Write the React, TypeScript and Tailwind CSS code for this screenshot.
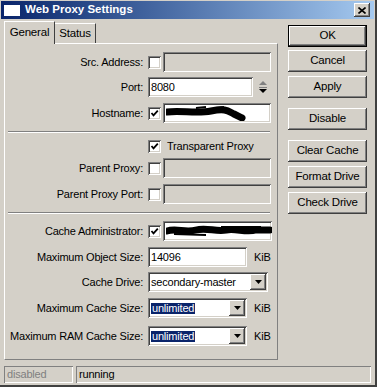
import React from 'react';

const raised =
  'shadow-[inset_-1px_-1px_0_#404040,inset_1px_1px_0_#ffffff,inset_-2px_-2px_0_#808080]';
const sunken =
  'shadow-[inset_1px_1px_0_#808080,inset_-1px_-1px_0_#ffffff,inset_2px_2px_0_#404040,inset_-2px_-2px_0_#d4d0c8]';
const thin = 'shadow-[inset_1px_1px_0_#808080,inset_-1px_-1px_0_#ffffff]';

const Check: React.FC<{ checked?: boolean }> = ({ checked }) => (
  <div className={`w-[13px] h-[13px] bg-white ${sunken} flex items-center justify-center shrink-0`}>
    {checked && (
      <svg width="9" height="9" viewBox="0 0 9 9">
        <path d="M1.5 4 L3.5 6.3 L7.8 1.6" fill="none" stroke="#000" strokeWidth="1.8" />
      </svg>
    )}
  </div>
);

const Field: React.FC<{ w: string; disabled?: boolean; children?: React.ReactNode }> = ({
  w,
  disabled,
  children,
}) => (
  <div
    className={`${w} h-[20px] ${disabled ? 'bg-[#d4d0c8]' : 'bg-white'} ${sunken} flex items-center pl-[3px] overflow-hidden`}
  >
    {children}
  </div>
);

const DropBtn = () => (
  <div className={`w-[16px] h-[16px] bg-[#d4d0c8] ${raised} flex items-center justify-center shrink-0`}>
    <svg width="7" height="4" viewBox="0 0 7 4">
      <path d="M0 0 H7 L3.5 4 Z" fill="#000" />
    </svg>
  </div>
);

const Select: React.FC<{ w: string; children: React.ReactNode }> = ({ w, children }) => (
  <div className={`${w} h-[20px] bg-white ${sunken} flex items-center pl-[3px] pr-[2px]`}>
    <div className="flex-1 overflow-hidden whitespace-nowrap">{children}</div>
    <DropBtn />
  </div>
);

const Row: React.FC<{ label?: string; mt: string; children: React.ReactNode }> = ({
  label,
  mt,
  children,
}) => (
  <div className={`flex items-center h-[20px] ${mt}`}>
    <div className="w-[138px] text-right whitespace-nowrap">{label}</div>
    <div className="ml-[5px] flex items-center">{children}</div>
  </div>
);

const Sep: React.FC<{ mt: string }> = ({ mt }) => (
  <div className={`${mt} ml-[3px] w-[262px] h-[2px] border-t border-t-[#808080] border-b border-b-white`} />
);

const Scribble: React.FC<{ long?: boolean }> = ({ long }) =>
  long ? (
    <svg width="106" height="16" viewBox="0 0 106 16" className="shrink-0">
      <path
        d="M1 8 C 10 5, 20 10, 30 7 S 50 9, 60 7 S 80 10, 90 7 L 104 7"
        fill="none"
        stroke="#000"
        strokeWidth="7"
        strokeLinecap="round"
      />
      <path d="M8 11 L 40 12 M 55 4 L 95 4" stroke="#000" strokeWidth="2" />
    </svg>
  ) : (
    <svg width="80" height="16" viewBox="0 0 80 16" className="shrink-0">
      <path
        d="M1 7 C 15 5, 30 9, 45 6 S 62 6, 68 9 S 74 12, 76 13"
        fill="none"
        stroke="#000"
        strokeWidth="7"
        strokeLinecap="round"
      />
      <path d="M30 3 L 40 2 M 50 3 L 58 2" stroke="#000" strokeWidth="2" />
    </svg>
  );

const Btn: React.FC<{ label: string; mt: string; def?: boolean }> = ({ label, mt, def }) => (
  <div
    className={`${mt} w-[79px] h-[22px] bg-[#d4d0c8] flex items-center justify-center text-[11.5px] ${
      def
        ? 'shadow-[inset_0_0_0_1px_#000000,inset_-2px_-2px_0_#404040,inset_2px_2px_0_#ffffff,inset_-3px_-3px_0_#808080]'
        : raised
    }`}
  >
    {label}
  </div>
);

const Hilite: React.FC = () => (
  <span className="bg-[#0a246a] text-white px-[1px]">unlimited</span>
);

export default function App() {
  return (
    <div className="w-[377px] h-[387px] bg-[#d4d0c8] pt-[1px] pl-[1px] border-r-2 border-b-2 border-r-[#404040] border-b-[#404040] font-['Liberation_Sans',Arial,sans-serif] text-[11px] tracking-[-0.2px] text-black leading-none flex flex-col">
      {/* title bar */}
      <div className="h-[18px] w-[373px] bg-gradient-to-r from-[#0a246a] to-[#a6caf0] flex items-center pl-[3px] pr-[4px]">
        <div className="w-[16px] h-[11px] bg-white mr-[5px]" />
        <span className="text-white font-bold text-[11.5px] tracking-normal">Web Proxy Settings</span>
        <div className={`ml-auto w-[16px] h-[14px] bg-[#d4d0c8] ${raised} flex items-center justify-center`}>
          <svg width="8" height="7" viewBox="0 0 8 7">
            <path d="M0.5 0.5 L7.5 6.5 M7.5 0.5 L0.5 6.5" stroke="#000" strokeWidth="1.6" />
          </svg>
        </div>
      </div>

      <div className="flex pl-[3px] mt-[1px]">
        {/* left: tabs + panel */}
        <div className="w-[274px] flex flex-col">
          <div className="flex items-end h-[23px]">
            <div className="w-[51px] h-[23px] bg-[#d4d0c8] border-l border-t border-white border-r border-r-[#404040] flex items-center justify-center relative top-[1px] z-10 text-[11.5px]">
              General
            </div>
            <div className="w-[41px] h-[20px] bg-[#d4d0c8] border-t border-t-white border-r border-r-[#404040] flex items-center justify-center text-[11.5px]">
              Status
            </div>
          </div>
          <div className="h-[317px] border-l border-t border-white border-r border-b border-r-[#808080] border-b-[#808080] flex flex-col">
            <Row label="Src. Address:" mt="mt-[8px]">
              <Check />
              <div className="ml-[2px]">
                <Field w="w-[108px]" disabled />
              </div>
            </Row>
            <Row label="Port:" mt="mt-[5px]">
              <Field w="w-[105px]">8080</Field>
              <svg width="10" height="14" viewBox="0 0 10 14" className="ml-[5px]">
                <path d="M1 5 L5 1 L9 5 Z" fill="#808080" />
                <path d="M1 7.5 H9" stroke="#808080" strokeWidth="1" />
                <path d="M1 9 L9 9 L5 13 Z" fill="#000" />
              </svg>
            </Row>
            <Row label="Hostname:" mt="mt-[6px]">
              <Check checked />
              <div className="ml-[2px]">
                <Field w="w-[108px]">
                  <Scribble />
                </Field>
              </div>
            </Row>
            <Sep mt="mt-[8px]" />
            <Row mt="mt-[3px]">
              <Check checked />
              <span className="ml-[6px]">Transparent Proxy</span>
            </Row>
            <Row label="Parent Proxy:" mt="mt-[2px]">
              <Check />
              <div className="ml-[2px]">
                <Field w="w-[108px]" disabled />
              </div>
            </Row>
            <Row label="Parent Proxy Port:" mt="mt-[6px]">
              <Check />
              <div className="ml-[2px]">
                <Field w="w-[108px]" disabled />
              </div>
            </Row>
            <Sep mt="mt-[8px]" />
            <Row label="Cache Administrator:" mt="mt-[7px]">
              <Check checked />
              <div className="ml-[2px]">
                <Field w="w-[109px]">
                  <Scribble long />
                </Field>
              </div>
            </Row>
            <Row label="Maximum Object Size:" mt="mt-[6px]">
              <Field w="w-[99px]">14096</Field>
              <span className="ml-[7px]">KiB</span>
            </Row>
            <Row label="Cache Drive:" mt="mt-[5px]">
              <Select w="w-[120px]">secondary-master</Select>
            </Row>
            <Row label="Maximum Cache Size:" mt="mt-[6px]">
              <Select w="w-[99px]">
                <Hilite />
              </Select>
              <span className="ml-[7px]">KiB</span>
            </Row>
            <Row label="Maximum RAM Cache Size:" mt="mt-[8px]">
              <Select w="w-[99px]">
                <Hilite />
              </Select>
              <span className="ml-[7px]">KiB</span>
            </Row>
          </div>
        </div>

        {/* right: buttons */}
        <div className="ml-[10px] flex flex-col">
          <Btn label="OK" mt="mt-[5px]" def />
          <Btn label="Cancel" mt="mt-[3px]" />
          <Btn label="Apply" mt="mt-[4px]" />
          <Btn label="Disable" mt="mt-[10px]" />
          <Btn label="Clear Cache" mt="mt-[10px]" />
          <Btn label="Format Drive" mt="mt-[4px]" />
          <Btn label="Check Drive" mt="mt-[4px]" />
        </div>
      </div>

      {/* status bar */}
      <div className="flex pl-[3px] mt-[6px] gap-[3px]">
        <div className={`w-[69px] h-[17px] ${thin} flex items-center pl-[3px] text-[#808080]`}>disabled</div>
        <div className={`w-[295px] h-[17px] ${thin} flex items-center pl-[3px]`}>running</div>
      </div>
    </div>
  );
}
